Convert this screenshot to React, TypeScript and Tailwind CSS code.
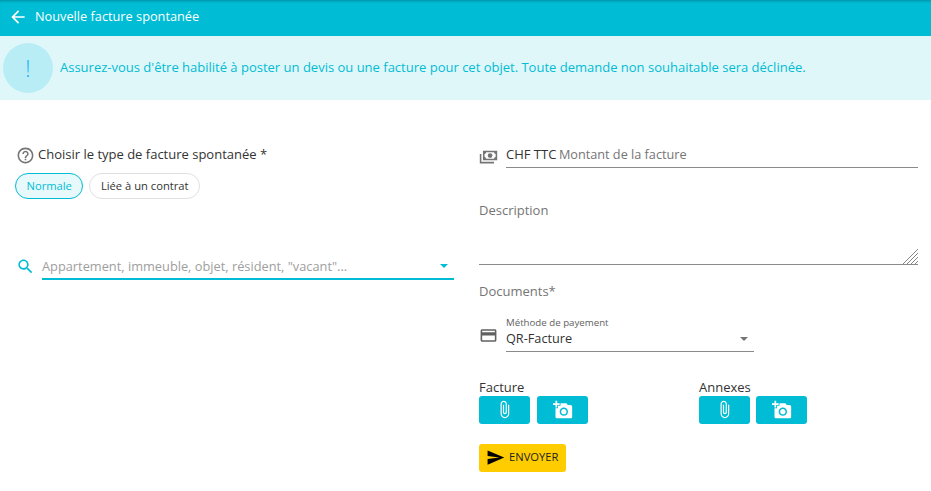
const Icon = ({ d, className }: { d: string; className: string }) => (
  <svg viewBox="0 0 24 24" fill="currentColor" className={className}>
    <path d={d} />
  </svg>
);

const icons = {
  back: "M20 11H7.83l5.59-5.59L12 4l-8 8 8 8 1.41-1.41L7.83 13H20v-2z",
  help: "M11 18h2v-2h-2v2zm1-16C6.48 2 2 6.48 2 12s4.48 10 10 10 10-4.48 10-10S17.52 2 12 2zm0 18c-4.41 0-8-3.59-8-8s3.59-8 8-8 8 3.59 8 8-3.59 8-8 8zm0-14c-2.21 0-4 1.79-4 4h2c0-1.1.9-2 2-2s2 .9 2 2c0 2-3 1.75-3 5h2c0-2.25 3-2.5 3-5 0-2.21-1.79-4-4-4z",
  search: "M15.5 14h-.79l-.28-.27C15.41 12.59 16 11.11 16 9.5 16 5.91 13.09 3 9.5 3S3 5.91 3 9.5 5.91 16 9.5 16c1.61 0 3.09-.59 4.23-1.57l.27.28v.79l5 4.99L20.49 19l-4.99-5zm-6 0C7.01 14 5 11.99 5 9.5S7.01 5 9.5 5 14 7.01 14 9.5 11.99 14 9.5 14z",
  cash: "M5,6H23V18H5V6M14,9A3,3 0 0,1 17,12A3,3 0 0,1 14,15A3,3 0 0,1 11,12A3,3 0 0,1 14,9M9,8A2,2 0 0,1 7,10V14A2,2 0 0,1 9,16H19A2,2 0 0,1 21,14V10A2,2 0 0,1 19,8H9M1,10H3V20H19V22H1V10Z",
  card: "M20 4H4c-1.11 0-1.99.89-1.99 2L2 18c0 1.11.89 2 2 2h16c1.11 0 2-.89 2-2V6c0-1.11-.89-2-2-2zm0 14H4v-6h16v6zm0-10H4V6h16v2z",
  clip: "M16.5 6v11.5c0 2.21-1.79 4-4 4s-4-1.79-4-4V5c0-1.38 1.12-2.5 2.5-2.5s2.5 1.12 2.5 2.5v10.5c0 .55-.45 1-1 1s-1-.45-1-1V6H10v9.5c0 1.38 1.12 2.5 2.5 2.5s2.5-1.12 2.5-2.5V5c0-2.21-1.79-4-4-4S7 2.79 7 5v12.5c0 3.04 2.46 5.5 5.5 5.5s5.5-2.46 5.5-5.5V6h-1.5z",
  photo: "M3 4V1h2v3h3v2H5v3H3V6H0V4h3zm3 6V7h3V4h7l1.83 2H21c1.1 0 2 .9 2 2v12c0 1.1-.9 2-2 2H5c-1.1 0-2-.9-2-2V10h3zm7 9c2.76 0 5-2.24 5-5s-2.24-5-5-5-5 2.24-5 5 2.24 5 5 5zm-3.2-5c0 1.77 1.43 3.2 3.2 3.2s3.2-1.43 3.2-3.2-1.43-3.2-3.2-3.2-3.2 1.43-3.2 3.2z",
  send: "M2.01 21L23 12 2.01 3 2 10l15 2-15 2z",
};

const Caret = ({ className }: { className: string }) => (
  <span className={`w-0 h-0 border-x-[4px] border-x-transparent border-t-[4px] ${className}`} />
);

const UploadGroup = ({ label, gap }: { label: string; gap: string }) => (
  <div className="w-[220px]">
    <div className="text-[13px] leading-[18px] text-[#333]">{label}</div>
    <div className={`flex ${gap}`}>
      <button className="w-[51px] h-[28px] rounded-[3px] bg-[#00bcd4] text-white flex items-center justify-center">
        <Icon d={icons.clip} className="w-[19px] h-[19px]" />
      </button>
      <button className="w-[51px] h-[28px] rounded-[3px] bg-[#00bcd4] text-white flex items-center justify-center">
        <Icon d={icons.photo} className="w-[20px] h-[20px]" />
      </button>
    </div>
  </div>
);

export default function App() {
  return (
    <div className="w-[931px] h-[491px] overflow-hidden bg-white font-['Open_Sans',sans-serif] text-[#333]">
      <header className="h-[36px] bg-[#00bcd4] text-white flex items-center pl-[8px] pb-[2px] gap-[7px] shadow-[inset_0_3px_3px_-2px_rgba(0,0,0,0.25)]">
        <Icon d={icons.back} className="w-[20px] h-[20px]" />
        <span className="text-[12.75px]">Nouvelle facture spontanée</span>
      </header>

      <div className="h-[64px] bg-[#e0f7fa] flex items-center pl-[3px] gap-[7px]">
        <div className="w-[50px] h-[50px] rounded-full bg-[#b9edf5] flex items-center justify-center text-[#29b6f6] text-[24px] font-light">
          !
        </div>
        <p className="text-[13px] text-[#00bcd4]">
          Assurez-vous d'être habilité à poster un devis ou une facture pour cet objet. Toute demande non souhaitable sera déclinée.
        </p>
      </div>

      <div className="flex">
        <section className="w-[479px] pl-[16px] pt-[45px]">
          <div className="flex items-center gap-[3px] h-[20px]">
            <Icon d={icons.help} className="w-[19px] h-[19px] text-[#757575]" />
            <span className="text-[13px] text-[#333]">Choisir le type de facture spontanée *</span>
          </div>
          <div className="flex gap-[6px] mt-[8px] -ml-[1px]">
            <span className="h-[26px] px-[10.5px] flex items-center rounded-full border border-[#00bcd4] bg-[#e8f9fb] text-[#00bcd4] text-[11.2px]">
              Normale
            </span>
            <span className="h-[26px] px-[10.5px] flex items-center rounded-full border border-[#e0e0e0] text-[#333] text-[11.2px]">
              Liée à un contrat
            </span>
          </div>
          <div className="flex items-end gap-[7px] mt-[54px]">
            <Icon d={icons.search} className="w-[19px] h-[19px] text-[#00bcd4] mb-[4px]" />
            <div className="w-[412px] h-[27px] border-b-2 border-[#00bcd4] flex items-center justify-between pr-[6px]">
              <span className="text-[12.8px] text-[#9e9e9e] mt-[2px]">Appartement, immeuble, objet, résident, "vacant"...</span>
              <Caret className="border-t-[#00bcd4]" />
            </div>
          </div>
        </section>

        <section className="flex-1 pt-[42px]">
          <div className="flex items-center gap-[8px]">
            <Icon d={icons.cash} className="w-[19px] h-[19px] text-[#757575]" />
            <div className="w-[412px] h-[26px] border-b border-[#8a8a8a] flex items-center gap-[2.5px]">
              <span className="text-[13px] text-[#333]">CHF TTC</span>
              <span className="text-[12.7px] text-[#757575]">Montant de la facture</span>
            </div>
          </div>

          <div className="w-[439px] h-[64px] mt-[33px] border-b border-[#8a8a8a] relative text-[13px] text-[#757575]">
            Description
            <svg viewBox="0 0 15 15" className="absolute right-0 bottom-0 w-[15px] h-[15px] text-[#777]" stroke="currentColor" strokeWidth="0.9">
              <path d="M0 15L15 0M4 15L15 4M8 15L15 8M12 15L15 12" />
            </svg>
          </div>

          <div className="mt-[17px] text-[13px] text-[#757575]">Documents*</div>

          <div className="flex items-center gap-[8px] mt-[15px]">
            <Icon d={icons.card} className="w-[19px] h-[19px] text-[#616161] mt-[2px]" />
            <div className="w-[248px] border-b border-[#8a8a8a] h-[35px]">
              <div className="text-[9.7px] leading-[12px] text-[#616161]">Méthode de payement</div>
              <div className="flex items-center justify-between pr-[6px] h-[20px]">
                <span className="text-[12.7px] text-[#333]">QR-Facture</span>
                <Caret className="border-t-[#757575]" />
              </div>
            </div>
          </div>

          <div className="flex mt-[26px]">
            <UploadGroup label="Facture" gap="gap-[7px]" />
            <UploadGroup label="Annexes" gap="gap-[6px]" />
          </div>

          <button className="mt-[20px] w-[87px] h-[28px] rounded-[3px] bg-[#ffcc00] text-[#222] flex items-center pl-[7px] gap-[4px] text-[11.2px]">
            <Icon d={icons.send} className="w-[19px] h-[19px] text-black" />
            ENVOYER
          </button>
        </section>
      </div>
    </div>
  );
}
